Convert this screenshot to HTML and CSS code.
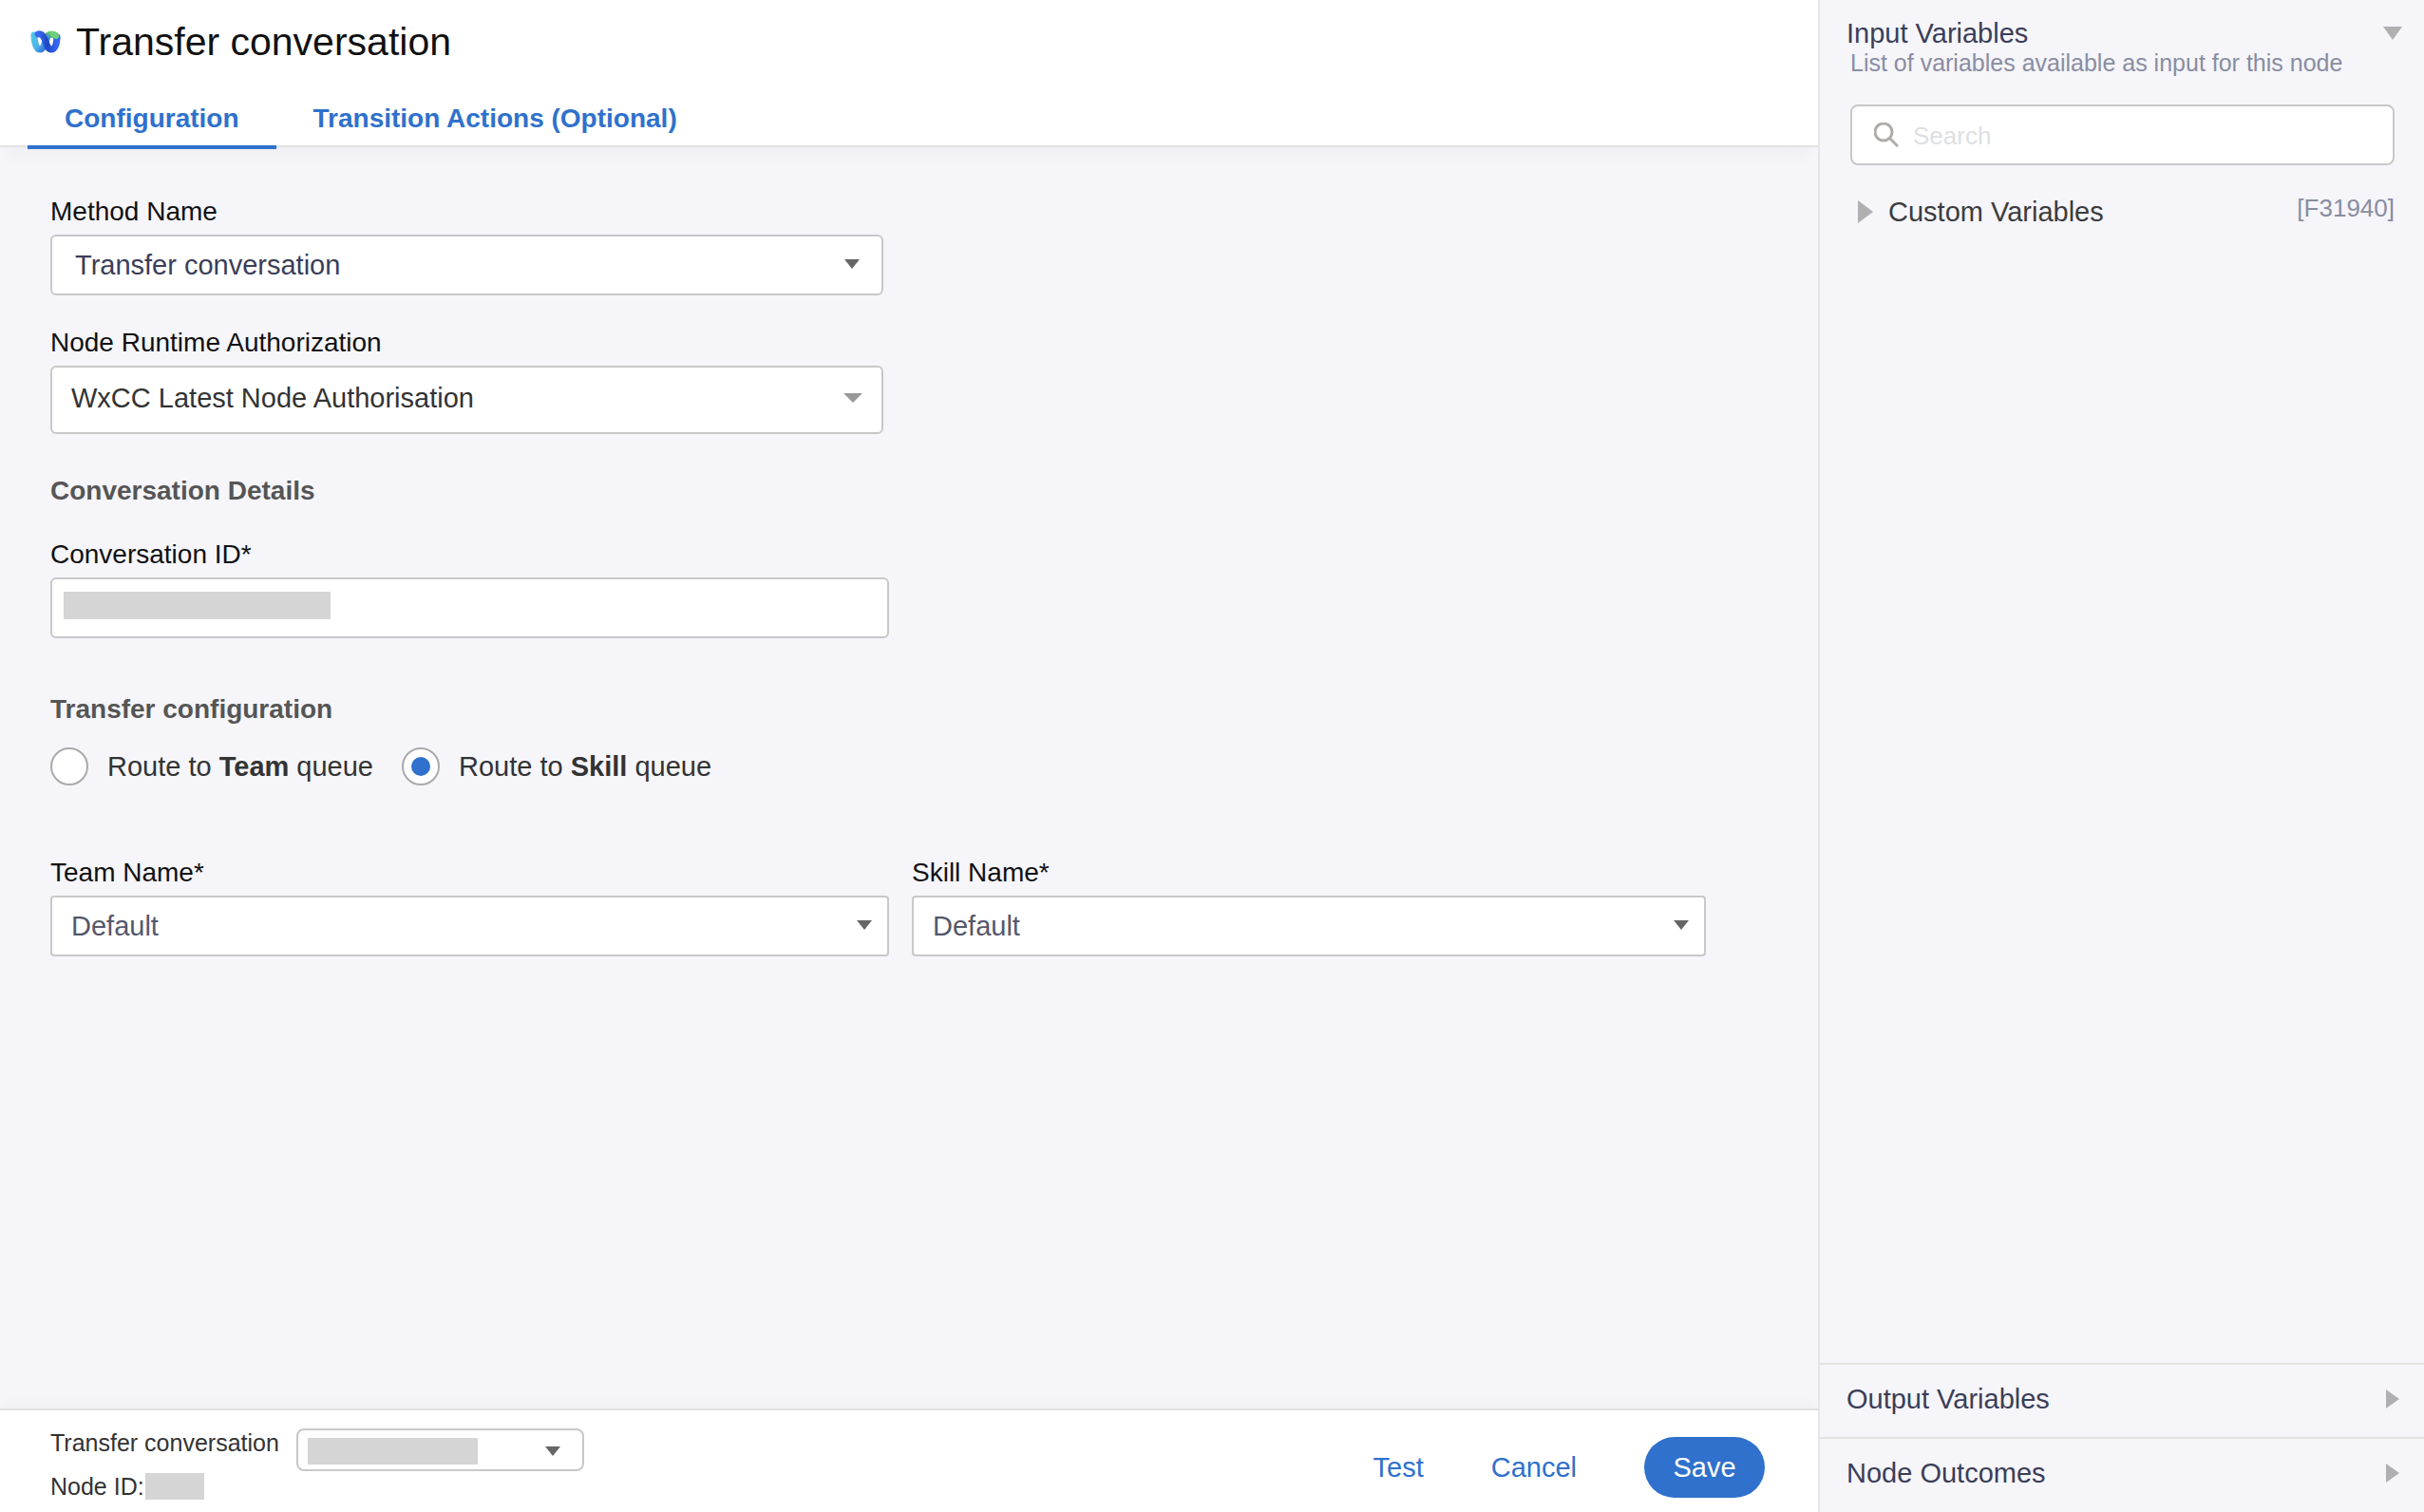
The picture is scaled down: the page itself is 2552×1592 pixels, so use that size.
FILE: index.html
```html
<!DOCTYPE html>
<html lang="en">
<head>
<meta charset="utf-8">
<title>Transfer conversation</title>
<link rel="stylesheet" href="styles.css">
</head>
<body>
<div class="app">
  <div class="editor">
    <header class="editor-header">
      <div class="title-row">
        <svg class="logo" viewBox="0 0 32 24" aria-hidden="true">
          <defs>
            <linearGradient id="cyan" x1="0" y1="0" x2="1" y2="1">
              <stop offset="0" stop-color="#4fc4e8"/>
              <stop offset="0.5" stop-color="#4fb4e6"/>
              <stop offset="1" stop-color="#2f68e0"/>
            </linearGradient>
            <linearGradient id="blue" x1="0" y1="0" x2="1" y2="0">
              <stop offset="0" stop-color="#3a6cf0"/>
              <stop offset="0.5" stop-color="#1d47c4"/>
              <stop offset="1" stop-color="#3566f5"/>
            </linearGradient>
            <linearGradient id="green" x1="0" y1="1" x2="1" y2="0">
              <stop offset="0" stop-color="#2a6fa0"/>
              <stop offset="0.6" stop-color="#55b583"/>
              <stop offset="1" stop-color="#6fdc6c"/>
            </linearGradient>
          </defs>
          <g fill="none" stroke-width="7" stroke-linecap="round">
            <path stroke="url(#green)" d="M17 9C18 5 20 4 22 4C25 4 27 5 28 8"/>
            <path stroke="url(#cyan)" d="M4 5C4 12 6 20 10 20C14 20 15 13 17 9"/>
            <path stroke="url(#blue)" d="M8 4C11 3 13 5 15 9C17 14 18 20 22 20C26 20 28 14 28 7"/>
          </g>
          <path stroke="#70d07a" stroke-width="6" stroke-linecap="round" d="M24 4L27 6"/>
        </svg>
        <h1 class="title">Transfer conversation</h1>
      </div>
      <div class="tabs" role="tablist">
        <button class="tab tab-active" role="tab" aria-selected="true">Configuration</button>
        <button class="tab" role="tab" aria-selected="false">Transition Actions (Optional)</button>
      </div>
    </header>

    <main class="form">
      <div class="row">
        <div class="field field-short">
          <label class="label" for="method">Method Name</label>
          <div class="control">
            <select class="input input-inset" id="method"><option>Transfer conversation</option></select>
            <svg class="arrow arrow-wide" viewBox="0 0 16 10" aria-hidden="true"><path d="M0 0h16L8 10z"/></svg>
          </div>
        </div>
      </div>
      <div class="row row-auth">
        <div class="field field-short">
          <label class="label" for="auth">Node Runtime Authorization</label>
          <div class="control">
            <select class="input input-tall" id="auth"><option>WxCC Latest Node Authorisation</option></select>
            <svg class="arrow arrow-light" viewBox="0 0 20 10" aria-hidden="true"><path d="M0 0h20L10 10z"/></svg>
          </div>
        </div>
      </div>

      <h2 class="section section-details">Conversation Details</h2>
      <div class="row">
        <div class="field">
          <label class="label" for="conversation">Conversation ID*</label>
          <div class="control">
            <input class="input" id="conversation" type="text">
            <span class="mask mask-id"></span>
          </div>
        </div>
      </div>

      <h2 class="section section-transfer">Transfer configuration</h2>
      <div class="radios">
        <label class="radio"><input type="radio" name="route"><span>Route to <b>Team</b> queue</span></label>
        <label class="radio"><input type="radio" name="route" checked><span>Route to <b>Skill</b> queue</span></label>
      </div>

      <div class="row">
        <div class="field">
          <label class="label" for="team">Team Name*</label>
          <div class="control">
            <select class="input input-square" id="team"><option>Default</option></select>
            <svg class="arrow" viewBox="0 0 16 10" aria-hidden="true"><path d="M0 0h16L8 10z"/></svg>
          </div>
        </div>
        <div class="field">
          <label class="label" for="skill">Skill Name*</label>
          <div class="control">
            <select class="input input-square" id="skill"><option>Default</option></select>
            <svg class="arrow" viewBox="0 0 16 10" aria-hidden="true"><path d="M0 0h16L8 10z"/></svg>
          </div>
        </div>
      </div>
    </main>

    <footer class="editor-footer">
      <div class="node-info">
        <div class="node-line">
          <label for="version">Transfer conversation</label>
          <div class="control control-small">
            <select class="input input-small" id="version"><option></option></select>
            <span class="mask mask-version"></span>
            <svg class="arrow arrow-wide" viewBox="0 0 16 10" aria-hidden="true"><path d="M0 0h16L8 10z"/></svg>
          </div>
        </div>
        <div class="node-id"><span>Node ID:</span><span class="mask mask-node"></span></div>
      </div>
      <div class="actions">
        <button class="action">Test</button>
        <button class="action">Cancel</button>
        <button class="action action-primary">Save</button>
      </div>
    </footer>
  </div>

  <aside class="sidebar">
    <section class="input-variables">
      <button class="panel-head">
        <span>Input Variables</span>
        <svg class="caret-down" viewBox="0 0 20 14" aria-hidden="true"><path d="M0 0h20L10 14z"/></svg>
      </button>
      <p class="panel-note">List of variables available as input for this node</p>
      <label class="search">
        <svg class="search-icon" viewBox="0 0 26 26" aria-hidden="true"><circle cx="10" cy="10" r="9"/><path d="M16 16l9 9"/></svg>
        <input type="search" placeholder="Search" aria-label="Search">
      </label>
      <div class="variable-row">
        <button class="variable">
          <svg class="caret-big" viewBox="0 0 16 24" aria-hidden="true"><path d="M0 0v24L16 12z"/></svg>
          <span>Custom Variables</span>
        </button>
        <span class="variable-tag">[F31940]</span>
      </div>
    </section>
    <button class="panel-row">
      <span>Output Variables</span>
      <svg class="caret-right" viewBox="0 0 14 20" aria-hidden="true"><path d="M0 0v20L14 10z"/></svg>
    </button>
    <button class="panel-row">
      <span>Node Outcomes</span>
      <svg class="caret-right" viewBox="0 0 14 20" aria-hidden="true"><path d="M0 0v20L14 10z"/></svg>
    </button>
  </aside>
</div>
</body>
</html>
```
FILE: styles.css
```css
* {
  box-sizing: border-box;
}

body {
  margin: 0;
  background: #f5f5fa;
  color: #111;
  font: 28px/32px "Liberation Sans", Arial, sans-serif;
}

button,
input,
select {
  margin: 0;
  padding: 0;
  border: 0;
  background: none;
  font: inherit;
  color: inherit;
}

.app {
  display: grid;
  grid-template-columns: 3fr 1fr;
  min-height: 100vh;
}

.editor {
  display: flex;
  flex-direction: column;
  min-width: 0;
}

/* Header and tabs */
.editor-header {
  border-bottom: 2px solid #e2e2e2;
  background: #fff;
  box-shadow: 0 14px 20px -8px rgba(0, 0, 0, 0.04);
}

.title-row {
  display: flex;
  align-items: center;
  gap: 16px;
  height: 88px;
  padding-left: 32px;
}

.logo {
  width: 32px;
  height: 24px;
}

.title {
  margin: 0;
  font-size: 41px;
  line-height: 48px;
  font-weight: 400;
}

.tabs {
  display: flex;
  margin-bottom: -4px;
  padding-left: 29px;
}

.tab {
  height: 69px;
  padding: 8px 39px 0;
  border-bottom: 4px solid transparent;
  color: #2f71cc;
  font-weight: 700;
}

.tab-active {
  border-color: #2f71cc;
}

/* Form */
.form {
  flex: 1;
  padding: 52px 118px 51px 53px;
}

.row {
  display: grid;
  grid-template-columns: 883fr 836fr;
  gap: 24px;
}

.row-auth {
  margin-top: 34px;
}

.field {
  display: grid;
  gap: 8px;
}

.field-short {
  margin-right: 6px;
}

.label {
  justify-self: start;
}

.control {
  display: grid;
  align-items: center;
}

.control > * {
  grid-area: 1 / 1;
}

.input {
  width: 100%;
  height: 64px;
  padding: 0 20px;
  border: 2px solid #c8c8c8;
  border-radius: 6px;
  appearance: none;
  background: #fff;
  color: #55586b;
  font-size: 29px;
}

.input-inset {
  padding-left: 24px;
  color: #3b3e58;
}

.input-tall {
  height: 72px;
  padding-bottom: 4px;
  color: #333;
}

.input-square {
  border-radius: 4px;
}

.arrow {
  justify-self: end;
  width: 16px;
  height: 10px;
  margin-right: 18px;
  margin-bottom: 2px;
  fill: #666;
  pointer-events: none;
}

.arrow-wide {
  margin-right: 25px;
}

.arrow-light {
  width: 20px;
  margin-right: 22px;
  margin-bottom: 4px;
  fill: #999;
}

.mask {
  display: block;
  background: #d5d5d5;
  pointer-events: none;
}

.mask-id {
  width: 281px;
  height: 29px;
  margin: 0 14px 6px;
}

.section {
  margin: 0;
  color: #555;
  font-size: 28px;
  line-height: 32px;
}

.section-details {
  margin: 44px 0 35px;
}

.section-transfer {
  margin: 59px 0 24px;
}

.radios {
  display: flex;
  gap: 30px;
  margin-bottom: 76px;
}

.radio {
  display: flex;
  align-items: center;
  gap: 20px;
  height: 40px;
  color: #333;
  font-size: 29px;
}

.radio input {
  display: grid;
  place-items: center;
  width: 40px;
  height: 40px;
  border: 2px solid #aaa;
  border-radius: 50%;
  appearance: none;
  background: #fff;
}

.radio input:checked::before {
  width: 20px;
  height: 20px;
  border-radius: 50%;
  background: #2f71cc;
  content: "";
}

/* Footer */
.editor-footer {
  display: flex;
  justify-content: space-between;
  padding: 18px 56px 11px 53px;
  border-top: 2px solid #e0e0e0;
  background: #fff;
  box-shadow: 0 -4px 12px rgba(0, 0, 0, 0.03);
}

.node-info {
  color: #333;
  font-size: 25px;
}

.node-line {
  display: flex;
  gap: 18px;
  height: 46px;
}

.control-small {
  width: 303px;
}

.input-small {
  height: 45px;
  border-radius: 8px;
}

.mask-version {
  width: 179px;
  height: 28px;
  margin: 3px 0 0 12px;
}

.control-small .arrow {
  margin-top: 4px;
  margin-bottom: 0;
}

.node-id {
  display: flex;
  align-items: center;
  gap: 1px;
}

.mask-node {
  width: 62px;
  height: 28px;
}

.actions {
  display: flex;
  align-items: center;
  gap: 71px;
  height: 64px;
  margin-top: 10px;
}

.action {
  color: #2f71cc;
  font-size: 29px;
}

.action-primary {
  width: 127px;
  height: 64px;
  border-radius: 32px;
  background: #2f71cc;
  color: #fff;
}

/* Sidebar */
.sidebar {
  display: flex;
  flex-direction: column;
  min-width: 0;
  padding-bottom: 1px;
  border-left: 2px solid #e6e6e6;
  background: #f5f5fa;
  color: #3b3e58;
  font-size: 29px;
}

.input-variables {
  flex: 1;
  padding: 19px 31px 0 32px;
}

.panel-head {
  display: flex;
  justify-content: space-between;
  align-items: center;
  width: calc(100% + 12px);
  margin-left: -4px;
}

.caret-down {
  width: 20px;
  height: 14px;
  fill: #b0b0b0;
}

.panel-note {
  margin: 0;
  color: #8a8da0;
  font-size: 25px;
  line-height: 30px;
}

.search {
  display: flex;
  align-items: center;
  gap: 15px;
  height: 64px;
  margin-top: 29px;
  padding: 0 23px;
  border: 2px solid #c8c8c8;
  border-radius: 8px;
  background: #fff;
}

.search-icon {
  flex: none;
  width: 26px;
  height: 26px;
  fill: none;
  stroke: #b0aca9;
  stroke-width: 3;
}

.search input {
  flex: 1;
  min-width: 0;
  padding-top: 2px;
  outline: 0;
  appearance: none;
  font-size: 26px;
}

.search input::placeholder {
  color: #dedfe4;
  opacity: 1;
}

.variable-row {
  display: flex;
  justify-content: space-between;
  margin-top: 29px;
  padding-left: 8px;
}

.variable {
  display: flex;
  align-items: center;
  gap: 16px;
  height: 40px;
  color: #3c3c3c;
}

.caret-big {
  width: 16px;
  height: 24px;
  fill: #b0b0b0;
}

.variable-tag {
  color: #8a8da0;
  font-size: 26px;
}

.panel-row {
  display: flex;
  justify-content: space-between;
  align-items: center;
  height: 78px;
  padding: 0 26px 4px 28px;
  border-top: 2px solid #e2e2e2;
}

.caret-right {
  width: 14px;
  height: 20px;
  fill: #b0b0b0;
}
```
